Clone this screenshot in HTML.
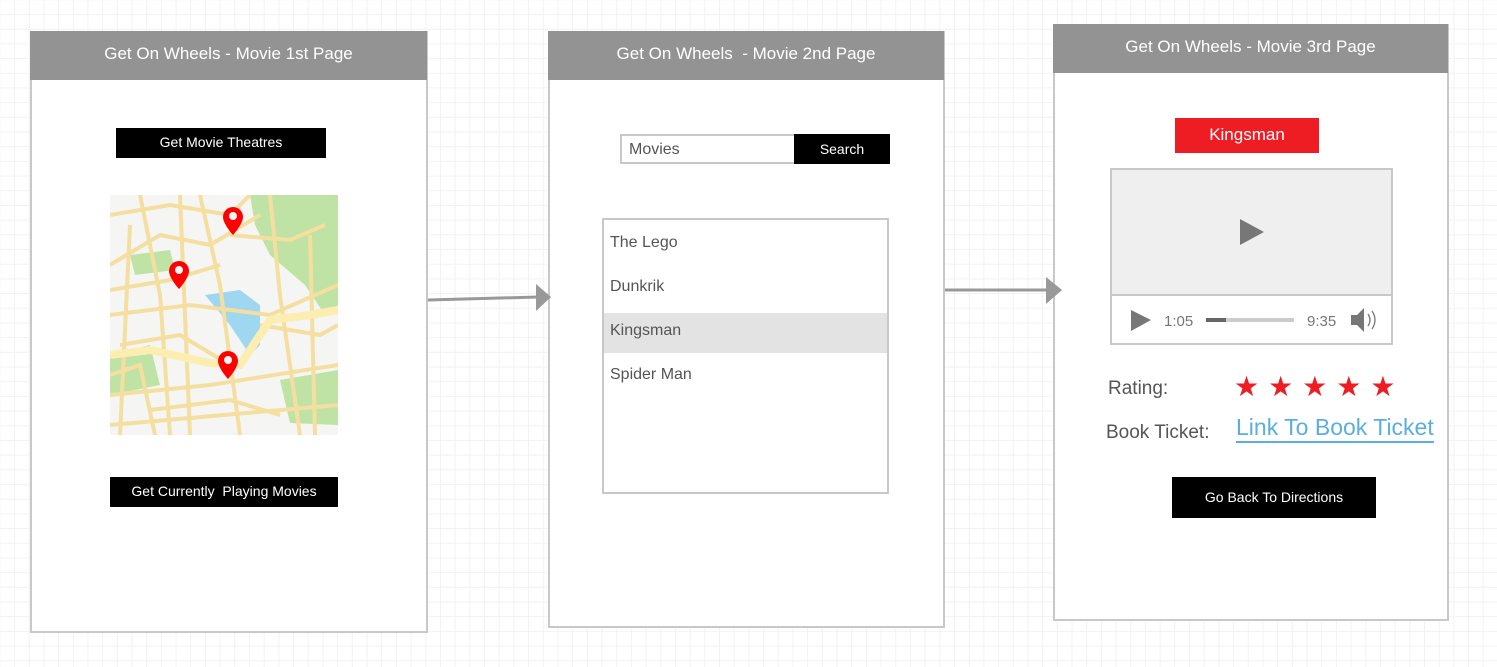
<!DOCTYPE html>
<html><head><style>
body{margin:0;width:1497px;height:667px;position:relative;overflow:hidden;font-family:"Liberation Sans",sans-serif;
background-color:#fff;background-image:linear-gradient(#f2f2f2 1px,transparent 1px),linear-gradient(90deg,#f2f2f2 1px,transparent 1px);background-size:14.7px 14.7px;background-position:14px 14px;}
.a{position:absolute;box-sizing:border-box}
.panel{background:#fff;border:2px solid #c8c8c8;}
.hdr{background:#939393;color:#fff;font-size:17px;text-align:center;}
.btn{background:#000;color:#fff;font-size:14px;text-align:center;}
.item{position:absolute;left:6px;font-size:16px;color:#555}
</style></head><body>
<!-- panel 1 -->
<div class="a panel" style="left:30px;top:31px;width:398px;height:602px"></div>
<div class="a hdr" style="left:30px;top:31px;width:397px;height:49px;line-height:46px">Get On Wheels - Movie 1st Page</div>
<div class="a btn" style="left:116px;top:128px;width:210px;height:30px;line-height:28px">Get Movie Theatres</div>
<svg class="a" style="left:110px;top:195px" width="228" height="240" viewBox="0 0 228 240">
<rect width="228" height="240" fill="#f5f5f3"/>
<path d="M140 0 L228 0 L228 110 L215 120 L195 90 L160 60 L145 30Z" fill="#bfe3a5"/>
<path d="M0 160 L40 150 L50 190 L0 200Z" fill="#bfe3a5"/>
<path d="M170 185 L228 175 L228 230 L180 228Z" fill="#bfe3a5"/>
<path d="M20 60 L60 55 L65 75 L25 80Z" fill="#bfe3a5"/>
<path d="M95 100 L130 95 L150 110 L150 150 L140 160 L120 130Z" fill="#9fd6f0"/>
<g stroke="#f4dfa0" stroke-width="4" fill="none">
<path d="M0 20 L60 10 L120 20 L140 0"/><path d="M0 70 L50 40 L100 50 L150 20"/><path d="M30 0 L50 100 L60 240"/>
<path d="M90 0 L110 90 L130 240"/><path d="M0 120 L80 110 L160 120 L228 90"/><path d="M0 200 L100 190 L228 170"/>
<path d="M160 0 L170 100 L190 240"/><path d="M0 230 L228 210"/><path d="M10 150 L70 140 L120 170"/>
<path d="M150 130 L210 140 L228 130"/><path d="M70 0 L80 240"/><path d="M20 30 L10 240"/><path d="M200 40 L205 240"/>
<path d="M0 95 L60 85 L110 70"/><path d="M40 215 L120 205 L170 220"/><path d="M120 40 L180 45 L215 30"/><path d="M0 180 L30 170 L45 240"/>
</g>
<path d="M0 160 L40 155 L100 168 L130 170 L150 140 L160 125 L200 120 L228 115" stroke="#fbeeb0" stroke-width="8" fill="none"/>
<g fill="#f00"><path d="M123 12 a10 10 0 0 1 10 10 c0 7 -10 18 -10 18 c0 0 -10 -11 -10 -18 a10 10 0 0 1 10 -10z"/>
<path d="M69 66 a10 10 0 0 1 10 10 c0 7 -10 18 -10 18 c0 0 -10 -11 -10 -18 a10 10 0 0 1 10 -10z"/>
<path d="M118 156 a10 10 0 0 1 10 10 c0 7 -10 18 -10 18 c0 0 -10 -11 -10 -18 a10 10 0 0 1 10 -10z"/></g>
<g fill="#f5f5f5"><circle cx="123" cy="21" r="4"/><circle cx="69" cy="75" r="4"/><circle cx="118" cy="165" r="4"/></g>
</svg>
<div class="a btn" style="left:110px;top:477px;width:228px;height:30px;line-height:29px">Get Currently&nbsp; Playing Movies</div>
<!-- panel 2 -->
<div class="a panel" style="left:548px;top:31px;width:397px;height:597px"></div>
<div class="a hdr" style="left:548px;top:31px;width:396px;height:49px;line-height:46px">Get On Wheels&nbsp; - Movie 2nd Page</div>
<div class="a" style="left:620px;top:134px;width:176px;height:30px;border:2px solid #c8c8c8;background:#fff;font-size:16px;color:#555;padding:5px 7px">Movies</div>
<div class="a btn" style="left:794px;top:134px;width:96px;height:30px;line-height:30px">Search</div>
<div class="a" style="left:602px;top:218px;width:287px;height:276px;border:2px solid #c8c8c8;background:#fff">
<div class="a" style="left:0;top:93px;width:283px;height:40px;background:#e3e3e3"></div>
<div class="item" style="top:14px">The Lego</div><div class="item" style="top:58px">Dunkrik</div>
<div class="item" style="top:102px">Kingsman</div><div class="item" style="top:146px">Spider Man</div></div>
<!-- panel 3 -->
<div class="a panel" style="left:1053px;top:24px;width:396px;height:597px"></div>
<div class="a hdr" style="left:1053px;top:24px;width:395px;height:49px;line-height:46px">Get On Wheels - Movie 3rd Page</div>
<div class="a" style="left:1175px;top:118px;width:144px;height:35px;background:#ee1d23;color:#fff;font-size:17px;text-align:center;line-height:34px">Kingsman</div>
<div class="a" style="left:1110px;top:168px;width:283px;height:177px;border:2px solid #c8c8c8;background:#fff">
<div class="a" style="left:0;top:0;width:279px;height:126px;background:#efefef;border-bottom:2px solid #c8c8c8"></div>
<svg class="a" style="left:0;top:0" width="279" height="173">
<path d="M128 49 L152 62 L128 75Z" fill="#777"/><path d="M19 140 L39 150 L19 161Z" fill="#777"/>
<text x="52" y="156" font-size="15" fill="#777" font-family="Liberation Sans">1:05</text>
<rect x="94" y="148" width="88" height="4" fill="#ccc"/><rect x="94" y="148" width="20" height="4" fill="#666"/>
<text x="195" y="156" font-size="15" fill="#777" font-family="Liberation Sans">9:35</text>
<path d="M239 145 L245 145 L252 138 L252 162 L245 155 L239 155Z" fill="#777"/>
<path d="M256 144 q4 6 0 12 M260 141 q6 9 0 18" stroke="#777" stroke-width="1.3" fill="none"/>
</svg></div>
<div class="a" style="left:1108px;top:378px;font-size:19px;color:#555">Rating:</div>
<div class="a" style="left:1234px;top:370px;font-size:28px;color:#ee1d23;letter-spacing:9px">★★★★★</div>
<div class="a" style="left:1106px;top:422px;font-size:19px;color:#555">Book Ticket:</div>
<div class="a" style="left:1236px;top:414px;font-size:23px;color:#5aaee0;border-bottom:2px solid #5aaee0;line-height:27px">Link To Book Ticket</div>
<div class="a btn" style="left:1172px;top:477px;width:204px;height:41px;line-height:41px">Go Back To Directions</div>
<!-- arrows -->
<svg class="a" style="left:0;top:0" width="1497" height="667">
<path d="M428 300 L538 297" stroke="#999" stroke-width="3"/><path d="M536 284 L551 297 L536 311Z" fill="#999"/>
<path d="M945 290 L1048 290" stroke="#999" stroke-width="3"/><path d="M1046 277 L1062 290 L1046 304Z" fill="#999"/>
</svg>
</body></html>
